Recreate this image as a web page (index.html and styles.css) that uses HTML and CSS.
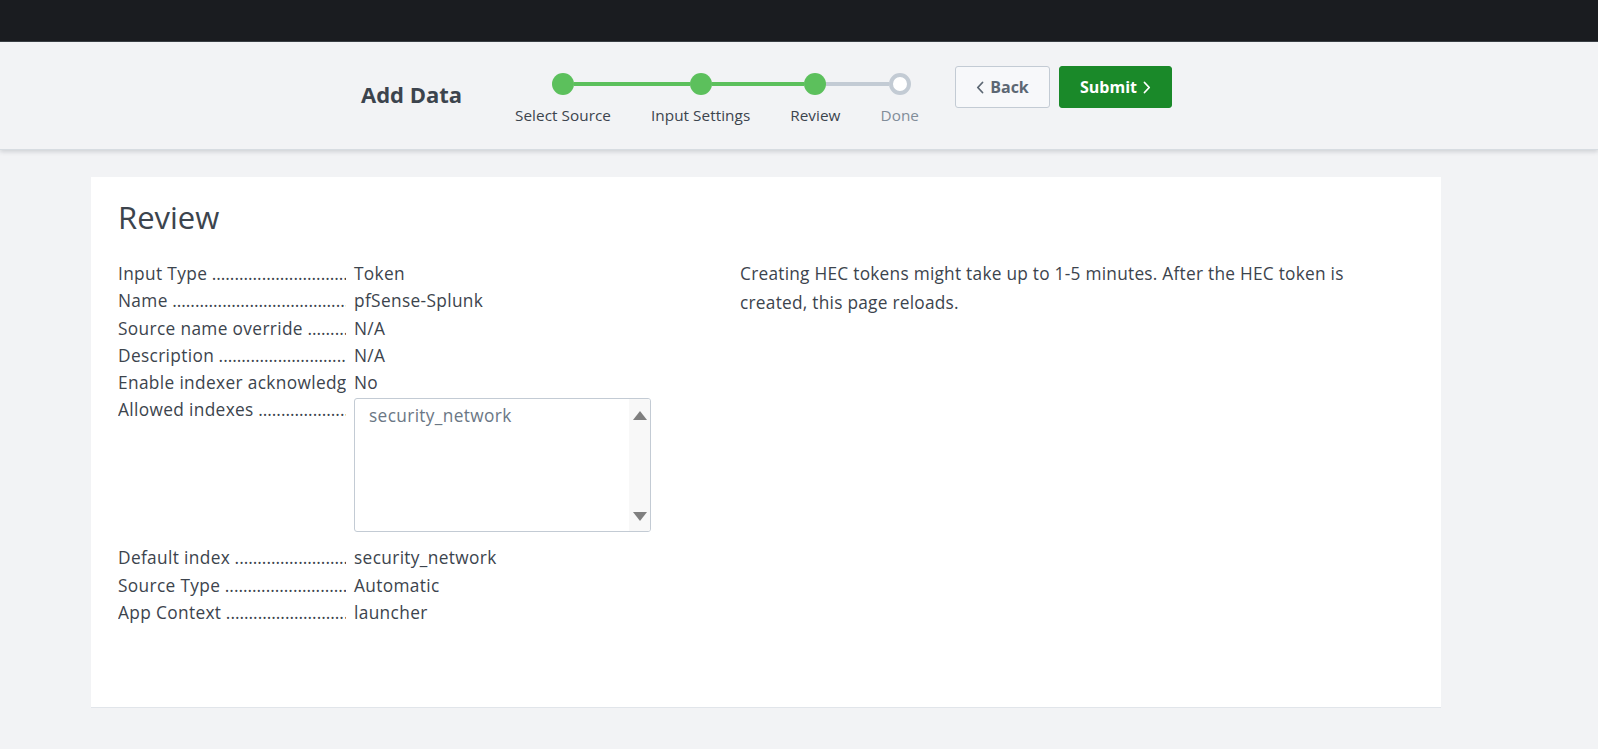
FILE: index.html
```html
<!DOCTYPE html>
<html lang="en">
<head>
<meta charset="utf-8">
<title>Add Data - Review</title>
<link rel="stylesheet" href="styles.css">
</head>
<body>
<div class="topbar"></div>
<header class="header">
  <div class="header-inner">
    <h1 class="title">Add Data</h1>
    <ol class="steps">
      <li class="step done-step first">
        <div class="track"><span class="seg seg-left"></span><span class="dot"></span><span class="seg seg-right green"></span></div>
        <span class="step-label">Select Source</span>
      </li>
      <li class="step done-step">
        <div class="track"><span class="seg seg-left green"></span><span class="dot"></span><span class="seg seg-right green"></span></div>
        <span class="step-label">Input Settings</span>
      </li>
      <li class="step done-step">
        <div class="track"><span class="seg seg-left green"></span><span class="dot"></span><span class="seg seg-right gray"></span></div>
        <span class="step-label">Review</span>
      </li>
      <li class="step todo-step last">
        <div class="track"><span class="seg seg-left gray"></span><span class="dot"></span><span class="seg seg-right"></span></div>
        <span class="step-label">Done</span>
      </li>
    </ol>
    <div class="actions">
      <button class="btn btn-back" type="button">
        <svg class="chev" width="8" height="13" viewBox="0 0 8 13"><path d="M6.5 1.5 L1.8 6.5 L6.5 11.5" fill="none" stroke="currentColor" stroke-width="1.8" stroke-linecap="round" stroke-linejoin="round"/></svg>
        <span>Back</span>
      </button>
      <button class="btn btn-submit" type="button">
        <span>Submit</span>
        <svg class="chev" width="8" height="13" viewBox="0 0 8 13"><path d="M1.5 1.5 L6.2 6.5 L1.5 11.5" fill="none" stroke="currentColor" stroke-width="1.8" stroke-linecap="round" stroke-linejoin="round"/></svg>
      </button>
    </div>
  </div>
</header>

<main class="card">
  <h2 class="card-title">Review</h2>
  <div class="columns">
    <div class="details">
      <div class="row"><div class="label">Input Type</div><div class="value">Token</div></div>
      <div class="row"><div class="label">Name</div><div class="value">pfSense-Splunk</div></div>
      <div class="row"><div class="label">Source name override</div><div class="value">N/A</div></div>
      <div class="row"><div class="label">Description</div><div class="value">N/A</div></div>
      <div class="row"><div class="label">Enable indexer acknowledgement</div><div class="value">No</div></div>
      <div class="row row-list">
        <div class="label">Allowed indexes</div>
        <div class="value">
          <div class="listbox">
            <div class="lb-items"><div class="lb-item">security_network</div></div>
            <div class="lb-scroll"><span class="arr arr-up"></span><span class="arr arr-down"></span></div>
          </div>
        </div>
      </div>
      <div class="row"><div class="label">Default index</div><div class="value">security_network</div></div>
      <div class="row"><div class="label">Source Type</div><div class="value">Automatic</div></div>
      <div class="row"><div class="label">App Context</div><div class="value">launcher</div></div>
    </div>
    <p class="note">Creating HEC tokens might take up to 1-5 minutes. After the HEC token is created, this page reloads.</p>
  </div>
</main>
</body>
</html>
```

FILE: styles.css
```css
* { box-sizing: border-box; }

body {
  margin: 0;
  background: #f2f3f5;
  font-family: "Open Sans", "Liberation Sans", sans-serif;
  color: #3c444d;
}

.topbar {
  height: 42px;
  background: #1a1c20;
  border-bottom: 1px solid #3a3f45;
}

.header {
  height: 108px;
  background: #f2f3f5;
  border-bottom: 1px solid #d7dce1;
  box-shadow: 0 2px 4px rgba(60, 68, 77, 0.18);
  position: relative;
}

.header-inner {
  display: flex;
  align-items: flex-start;
  margin-left: 361px;
}

.title {
  margin: 37px 0 0 0;
  font-size: 22px;
  line-height: 30px;
  font-weight: 700;
  color: #3c444d;
  width: 134px;
  white-space: nowrap;
}

.steps {
  list-style: none;
  margin: 31px 0 0 0;
  padding: 0;
  display: flex;
}

.step {
  display: flex;
  flex-direction: column;
  align-items: stretch;
}

.track {
  display: flex;
  align-items: center;
  height: 22px;
}

.seg {
  flex: 1;
  height: 4px;
}
.seg.green { background: #5cc05c; }
.seg.gray { background: #c3cbd4; }

.dot {
  width: 22px;
  height: 22px;
  border-radius: 50%;
  flex: none;
}
.done-step .dot { background: #5cc05c; }
.todo-step .dot {
  background: #ffffff;
  border: 4px solid #c3cbd4;
}

.step-label {
  padding: 0 20px;
  margin-top: 10px;
  font-size: 15.3px;
  letter-spacing: 0.05px;
  line-height: 20px;
  text-align: center;
  white-space: nowrap;
  color: #3c444d;
}
.todo-step .step-label { color: #818d99; }

.actions {
  display: flex;
  gap: 9px;
  margin: 24px 0 0 16px;
}

.btn {
  height: 42px;
  border-radius: 3px;
  font-family: inherit;
  font-size: 16px;
  font-weight: 700;
  display: inline-flex;
  align-items: center;
  justify-content: center;
  gap: 6px;
  cursor: pointer;
  padding: 0;
}

.btn-back {
  width: 95px;
  background: #f7f8fa;
  border: 1px solid #c3cbd4;
  color: #5c6773;
}

.btn-submit {
  width: 113px;
  background: #1a8929;
  border: 1px solid #1a8929;
  color: #ffffff;
}

.chev { display: block; }

.card {
  margin: 27px 0 0 91px;
  width: 1350px;
  min-height: 531px;
  background: #ffffff;
  border-bottom: 1px solid #e1e5ea;
  padding: 20px 27px 60px 27px;
}

.card-title {
  margin: 0;
  font-size: 31px;
  line-height: 40px;
  font-weight: 400;
  color: #3c444d;
}

.columns {
  display: flex;
  margin-top: 23px;
}

.details {
  width: 622px;
  flex: none;
  font-size: 17.3px;
  letter-spacing: 0.35px;
}

.row {
  display: flex;
  line-height: 27.3px;
}

.label {
  width: 228px;
  flex: none;
  overflow: hidden;
  white-space: nowrap;
}
.label::after {
  content: " ........................................................................................................";
  letter-spacing: 0;
}

.value {
  margin-left: 8px;
  white-space: nowrap;
}

.row-list { margin-bottom: 12px; }

.listbox {
  margin-top: 2px;
  width: 297px;
  height: 134px;
  border: 1px solid #c3cbd4;
  border-radius: 3px;
  display: flex;
  overflow: hidden;
}

.lb-items {
  flex: 1;
  padding: 3px 14px;
}

.lb-item {
  color: #6b7785;
}

.lb-scroll {
  width: 21px;
  background: #f8f8f8;
  display: flex;
  flex-direction: column;
  justify-content: space-between;
  align-items: center;
  padding: 12px 0 10px 0;
}

.arr {
  width: 0;
  height: 0;
  border-left: 7px solid transparent;
  border-right: 7px solid transparent;
}
.arr-up { border-bottom: 9px solid #7f7f7f; }
.arr-down { border-top: 9px solid #7f7f7f; }

.note {
  margin: 0;
  width: 665px;
  font-size: 17.3px;
  letter-spacing: 0.25px;
  line-height: 28.5px;
  color: #3c444d;
}
```
